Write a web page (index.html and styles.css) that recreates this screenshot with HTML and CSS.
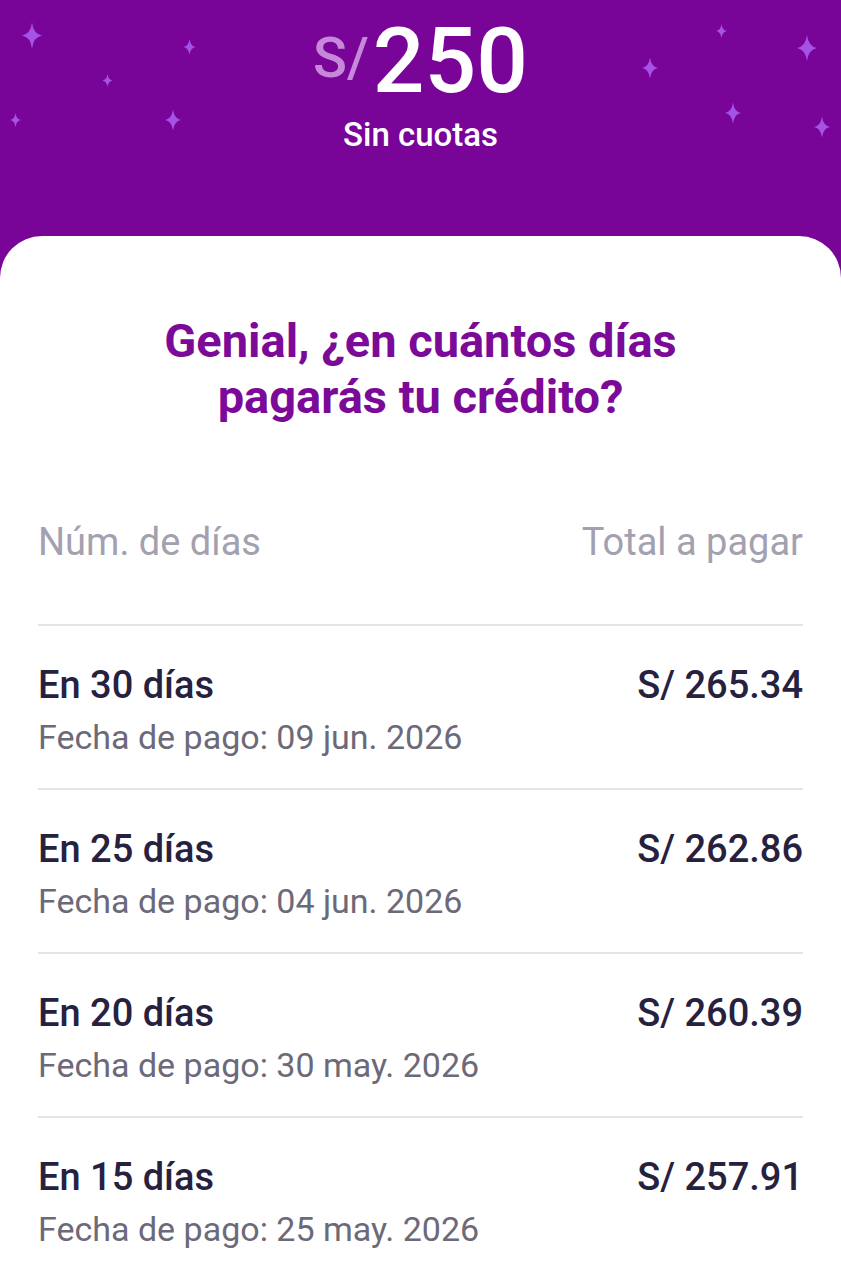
FILE: index.html
```html
<!DOCTYPE html>
<html lang="es">
<head>
<meta charset="utf-8">
<title>Crédito</title>
<link rel="stylesheet" href="styles.css">
</head>
<body>
<div class="page">
  <header class="hero">
    <svg class="spark" style="left:22px;top:22px;width:20px;height:27px" viewBox="0 0 20 26"><path d="M10 0Q11.5 11.5 20 13Q11.5 14.5 10 26Q8.5 14.5 0 13Q8.5 11.5 10 0Z"/></svg>
    <svg class="spark" style="left:183px;top:39px;width:13px;height:16px" viewBox="0 0 20 26"><path d="M10 0Q11.5 11.5 20 13Q11.5 14.5 10 26Q8.5 14.5 0 13Q8.5 11.5 10 0Z"/></svg>
    <svg class="spark" style="left:102px;top:74px;width:11px;height:13px" viewBox="0 0 20 26"><path d="M10 0Q11.5 11.5 20 13Q11.5 14.5 10 26Q8.5 14.5 0 13Q8.5 11.5 10 0Z"/></svg>
    <svg class="spark" style="left:10px;top:113px;width:11px;height:14px" viewBox="0 0 20 26"><path d="M10 0Q11.5 11.5 20 13Q11.5 14.5 10 26Q8.5 14.5 0 13Q8.5 11.5 10 0Z"/></svg>
    <svg class="spark" style="left:165px;top:109px;width:16px;height:22px" viewBox="0 0 20 26"><path d="M10 0Q11.5 11.5 20 13Q11.5 14.5 10 26Q8.5 14.5 0 13Q8.5 11.5 10 0Z"/></svg>
    <svg class="spark" style="left:716px;top:24px;width:11px;height:14px" viewBox="0 0 20 26"><path d="M10 0Q11.5 11.5 20 13Q11.5 14.5 10 26Q8.5 14.5 0 13Q8.5 11.5 10 0Z"/></svg>
    <svg class="spark" style="left:797px;top:34px;width:20px;height:28px" viewBox="0 0 20 26"><path d="M10 0Q11.5 11.5 20 13Q11.5 14.5 10 26Q8.5 14.5 0 13Q8.5 11.5 10 0Z"/></svg>
    <svg class="spark" style="left:642px;top:57px;width:16px;height:22px" viewBox="0 0 20 26"><path d="M10 0Q11.5 11.5 20 13Q11.5 14.5 10 26Q8.5 14.5 0 13Q8.5 11.5 10 0Z"/></svg>
    <svg class="spark" style="left:725px;top:102px;width:16px;height:22px" viewBox="0 0 20 26"><path d="M10 0Q11.5 11.5 20 13Q11.5 14.5 10 26Q8.5 14.5 0 13Q8.5 11.5 10 0Z"/></svg>
    <svg class="spark" style="left:814px;top:116px;width:16px;height:22px" viewBox="0 0 20 26"><path d="M10 0Q11.5 11.5 20 13Q11.5 14.5 10 26Q8.5 14.5 0 13Q8.5 11.5 10 0Z"/></svg>
    <div class="amount">
      <span class="currency">S/</span>
      <span class="value">250</span>
    </div>
    <div class="subtitle">Sin cuotas</div>
  </header>
  <main class="card">
    <h1 class="title">Genial, ¿en cuántos días<br>pagarás tu crédito?</h1>
    <div class="cols">
      <span>Núm. de días</span>
      <span>Total a pagar</span>
    </div>
    <ul class="options">
      <li class="option">
        <div class="option-main"><span>En 30 días</span><span>S/ 265.34</span></div>
        <div class="option-date">Fecha de pago: 09 jun. 2026</div>
      </li>
      <li class="option">
        <div class="option-main"><span>En 25 días</span><span>S/ 262.86</span></div>
        <div class="option-date">Fecha de pago: 04 jun. 2026</div>
      </li>
      <li class="option">
        <div class="option-main"><span>En 20 días</span><span>S/ 260.39</span></div>
        <div class="option-date">Fecha de pago: 30 may. 2026</div>
      </li>
      <li class="option">
        <div class="option-main"><span>En 15 días</span><span>S/ 257.91</span></div>
        <div class="option-date">Fecha de pago: 25 may. 2026</div>
      </li>
    </ul>
  </main>
</div>
</body>
</html>
```

FILE: styles.css
```css
* { box-sizing: border-box; }
html, body {
  margin: 0;
  padding: 0;
  background: #790598;
  font-family: Roboto, "Liberation Sans", Arial, sans-serif;
}
.page {
  width: 841px;
  height: 1280px;
  overflow: hidden;
  background: #790598;
}
.hero {
  position: relative;
  height: 236px;
  padding-top: 16px;
  display: flex;
  flex-direction: column;
  align-items: center;
}
.spark {
  position: absolute;
  fill: #a552e6;
}
.amount {
  display: flex;
  align-items: flex-start;
  gap: 4px;
}
.currency {
  font-size: 56px;
  line-height: 1;
  font-weight: 500;
  color: #c689da;
  margin-top: 14px;
}
.value {
  font-size: 91px;
  line-height: 1;
  font-weight: 500;
  color: #ffffff;
}
.subtitle {
  margin-top: 10px;
  font-size: 33px;
  line-height: 36px;
  font-weight: 500;
  color: #ffffff;
}
.card {
  background: #ffffff;
  border-radius: 42px 42px 0 0;
  padding: 77px 38px 0 38px;
  height: 1044px;
}
.title {
  margin: 0;
  text-align: center;
  font-size: 47px;
  line-height: 56px;
  font-weight: 700;
  color: #7b0a98;
}
.cols {
  margin-top: 91px;
  display: flex;
  justify-content: space-between;
  font-size: 38px;
  line-height: 52px;
  color: #a3a1af;
}
.options {
  list-style: none;
  margin: 56px 0 0 0;
  padding: 0;
}
.option {
  border-top: 2px solid #e4e3ea;
  padding: 33px 0 25px 0;
}
.option-main {
  display: flex;
  justify-content: space-between;
  font-size: 38px;
  line-height: 52px;
  font-weight: 500;
  color: #272140;
}
.option-date {
  font-size: 34px;
  line-height: 52px;
  color: #6c6979;
}
```
